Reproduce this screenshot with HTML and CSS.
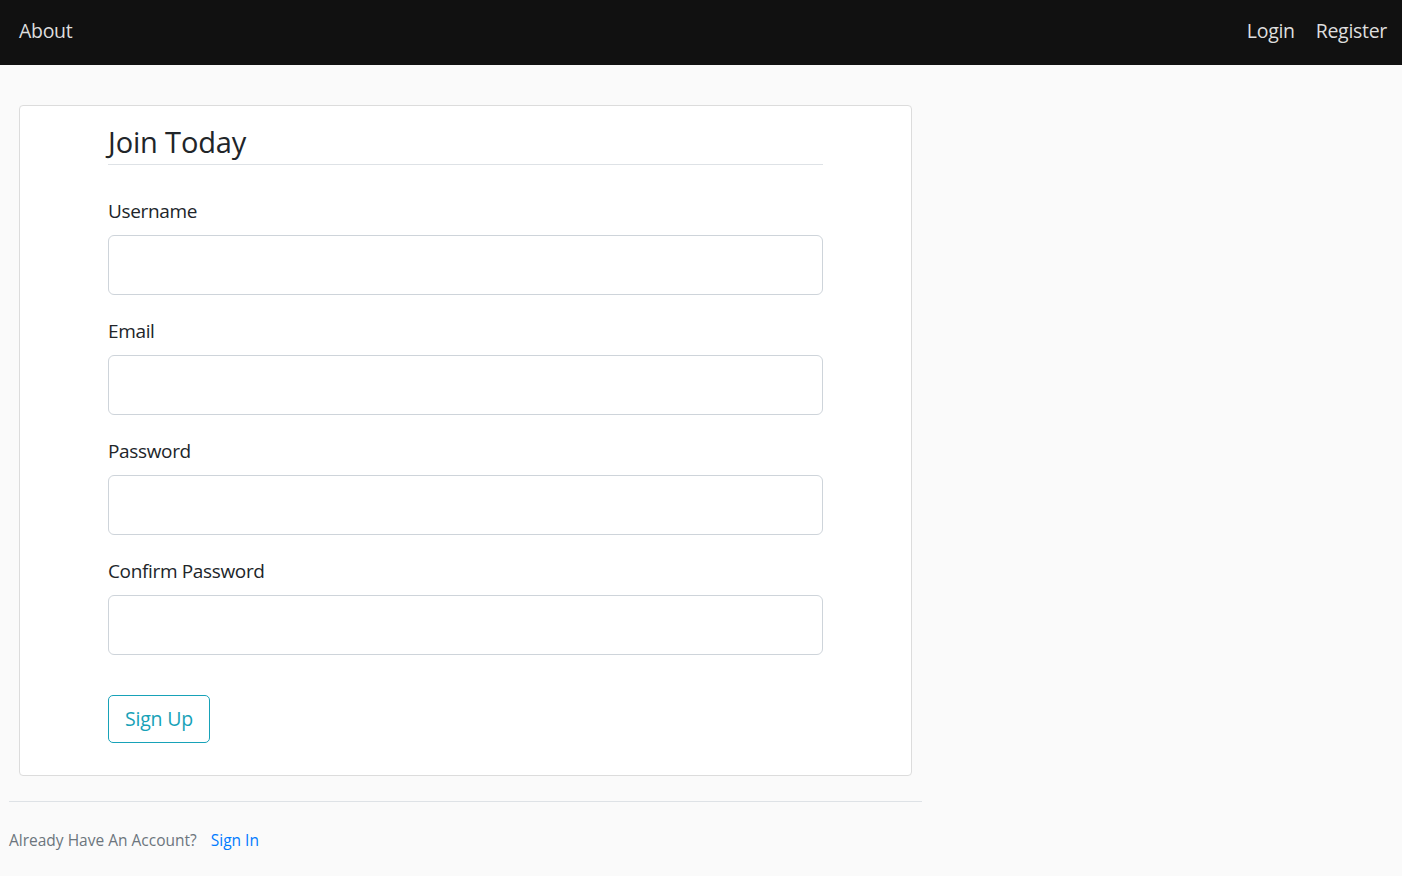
FILE: index.html
```html
<!DOCTYPE html>
<html lang="en">
<head>
<meta charset="utf-8">
<title>Register</title>
<link rel="stylesheet" href="styles.css">
</head>
<body>
<header class="navbar">
  <nav class="nav-left"><a class="nav-link" href="#">About</a></nav>
  <nav class="nav-right">
    <a class="nav-link" href="#">Login</a>
    <a class="nav-link" href="#">Register</a>
  </nav>
</header>
<main class="container">
  <section class="card">
    <form class="form">
      <h1 class="legend">Join Today</h1>
      <div class="group">
        <label class="label" for="u">Username</label>
        <input class="input" id="u" type="text">
      </div>
      <div class="group">
        <label class="label" for="e">Email</label>
        <input class="input" id="e" type="email">
      </div>
      <div class="group">
        <label class="label" for="p">Password</label>
        <input class="input" id="p" type="password">
      </div>
      <div class="group">
        <label class="label" for="c">Confirm Password</label>
        <input class="input" id="c" type="password">
      </div>
      <div class="actions">
        <button class="btn" type="button">Sign Up</button>
      </div>
    </form>
  </section>
  <div class="footer">
    <small class="muted">Already Have An Account? <a class="link" href="#">Sign In</a></small>
  </div>
</main>
</body>
</html>
```
FILE: styles.css
```css
* { box-sizing: border-box; }
html, body { margin: 0; padding: 0; }
body {
  background: #fafafa;
  font-family: "Open Sans", "Noto Sans", sans-serif;
  color: #212529;
}
.navbar {
  height: 65px;
  background: #111111;
  display: flex;
  align-items: center;
  justify-content: space-between;
  padding: 0 15px 4px 19px;
}
.nav-right { display: flex; gap: 21px; }
.nav-link {
  color: #dedede;
  text-decoration: none;
  font-size: 19.5px;
  letter-spacing: -0.3px;
  line-height: 30px;
}
.container {
  width: 913px;
  margin-left: 9px;
  padding-top: 40px;
}
.card {
  margin: 0 10px 0 10px;
  background: #fff;
  border: 1px solid #dcdcdc;
  border-radius: 4px;
  padding: 18px 88px 32px 88px;
}
.legend {
  margin: 0 0 31px;
  font-weight: 400;
  font-size: 29px;
  letter-spacing: -0.15px;
  line-height: 36px;
  padding-bottom: 4px;
  border-bottom: 1px solid #dee2e6;
}
.group { margin-bottom: 21px; }
.label {
  display: block;
  font-size: 19px;
  letter-spacing: -0.35px;
  line-height: 30px;
  margin-bottom: 9px;
}
.input {
  display: block;
  width: 100%;
  height: 60px;
  border: 1px solid #ced4da;
  border-radius: 6px;
  background: #fff;
  font: inherit;
}
.actions { margin-top: 40px; }
.btn {
  font: inherit;
  font-size: 19.5px;
  letter-spacing: -0.2px;
  line-height: 30px;
  padding: 8px 16px;
  height: 48px;
  color: #17a2b8;
  background: transparent;
  border: 1px solid #17a2b8;
  border-radius: 5px;
}
.footer {
  margin-top: 25px;
  border-top: 1px solid #dee2e6;
  padding-top: 26px;
}
.muted {
  font-size: 15.5px;
  line-height: 24px;
  color: #6c757d;
}
.link {
  color: #007bff;
  text-decoration: none;
  margin-left: 10px;
}
```
